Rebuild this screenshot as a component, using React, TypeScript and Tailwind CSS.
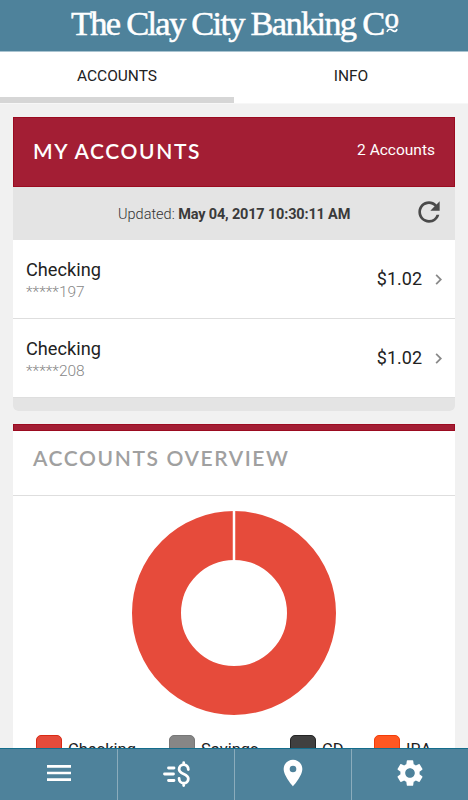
import { MdChevronRight, MdMenu, MdPlace, MdRefresh, MdSettings } from 'react-icons/md';

const accounts = [
  { name: 'Checking', number: '*****197', balance: '$1.02' },
  { name: 'Checking', number: '*****208', balance: '$1.02' },
];

const legend = [
  { label: 'Checking', swatch: 'bg-[#e64b3b] border-[#d92a14]', width: 'w-[133px]' },
  { label: 'Savings', swatch: 'bg-[#868686] border-[#777777]', width: 'w-[121px]' },
  { label: 'CD', swatch: 'bg-[#404040] border-[#242424]', width: 'w-[84px]' },
  { label: 'IRA', swatch: 'bg-[#ff5722] border-[#f23c08]', width: 'w-[70px]' },
];

export default function App() {
  return (
    <div className="flex h-[800px] w-[468px] flex-col overflow-hidden bg-[#f1f1f1] font-['Roboto',sans-serif] text-[#222222]">
      <Header />
      <Tabs />
      <main className="min-h-0 flex-1 overflow-hidden px-[13px] pt-[13px]">
        <AccountsCard />
        <OverviewCard />
      </main>
      <BottomNav />
    </div>
  );
}

function Header() {
  return (
    <header className="flex h-[52px] shrink-0 border-b border-[#a9c3d0] bg-[#4e829b] pl-[71px] text-white">
      <h1 className="flex h-[46px] items-center whitespace-nowrap font-['Liberation_Serif',serif] text-[34.5px] leading-none tracking-[-1.75px] [-webkit-text-stroke:0.5px_white]">
        The Clay City Banking C
        <span className="relative -top-[5px] ml-px text-[29px]">
          o
          <svg className="absolute left-0.5 top-[24px]" width="12" height="5" viewBox="0 0 13 5" fill="none" stroke="currentColor" strokeWidth="1.8">
            <path d="M1 4C3 0 5 1 7 2.500S11 4 12 1" />
          </svg>
        </span>
      </h1>
    </header>
  );
}

function Tabs() {
  return (
    <div className="grid h-[52px] shrink-0 grid-cols-2 border-b border-[#f7f7f7] bg-white text-center text-[15.5px] leading-[49px]">
      <div className="h-[51px] border-b-[6px] border-[#d6d6d6]">ACCOUNTS</div>
      <div className="h-[51px]">INFO</div>
    </div>
  );
}

function AccountsCard() {
  return (
    <section className="overflow-hidden rounded-b-[5px] bg-white">
      <div className="flex h-[70px] items-center justify-between border border-[#9b0b20] bg-[#a31e34] px-[19px] pb-[3px] text-white">
        <h2 className="font-['Lato',sans-serif] text-[21px] font-semibold tracking-[1.6px]">MY ACCOUNTS</h2>
        <span className="text-[15.5px]">2 Accounts</span>
      </div>
      <div className="flex h-[53px] items-center bg-[#e4e4e4] pl-[105px] pr-[12px] text-[14.5px] text-[#333333]">
        <p className="flex-1 whitespace-nowrap pt-0.5 font-light">
          Updated: <b className="font-bold tracking-[-0.17px] text-[#3a3a3a]">May 04, 2017 10:30:11 AM</b>
        </p>
        <MdRefresh className="mb-[3px] size-8 -mr-0.5 text-[#4a4a4a]" />
      </div>
      {accounts.map((account) => (
        <div
          key={account.number}
          className="flex h-[79px] items-center justify-between border-b border-[#dedede] pl-[13px] pr-[6px]"
        >
          <div className="pt-1">
            <div className="text-[18.2px] leading-[22px]">{account.name}</div>
            <div className="text-[15.5px] font-light leading-[22px] text-[#888888]">{account.number}</div>
          </div>
          <div className="flex items-center gap-[6px]">
            <span className="text-lg">{account.balance}</span>
            <MdChevronRight className="size-[21px] text-[#888888]" />
          </div>
        </div>
      ))}
      <div className="h-[13px] bg-[#e4e4e4]" />
    </section>
  );
}

function OverviewCard() {
  return (
    <section className="mt-[13px] h-[360px] bg-white">
      <div className="h-[7px] border border-[#9b0b20] bg-[#a31e34]" />
      <div className="flex h-[65px] items-center border-b border-[#dedede] px-5 pb-[10px]">
        <h2 className="font-['Lato',sans-serif] text-[21px] font-semibold tracking-[1.6px] text-[#a0a0a0]">
          ACCOUNTS OVERVIEW
        </h2>
      </div>
      <svg className="mx-auto mt-[14px] block" width="206" height="206" viewBox="0 0 206 206">
        <circle cx="103" cy="103" r="77.5" fill="none" stroke="#e64b3b" strokeWidth="49" />
        <path d="M103 0V52" stroke="#fff" strokeWidth="2.5" />
      </svg>
      <div className="mt-[19px] flex pl-[23px]">
        {legend.map((item) => (
          <div key={item.label} className={`flex shrink-0 items-start gap-[6px] ${item.width}`}>
            <span className={`size-[26px] rounded-[5px] border ${item.swatch}`} />
            <span className="pt-[5px] text-[16.500px] leading-5">{item.label}</span>
          </div>
        ))}
      </div>
    </section>
  );
}

function BottomNav() {
  return (
    <nav className="grid h-[52px] shrink-0 grid-cols-4 border-t border-[#146d8c] bg-[#4e829b] text-white *:flex *:items-center *:justify-center *:border-l *:border-[#8bacbc] *:pb-[3px] *:first:border-transparent">
      <div>
        <MdMenu className="size-8" />
      </div>
      <div>
        <TransferIcon />
      </div>
      <div>
        <MdPlace className="size-8" />
      </div>
      <div>
        <MdSettings className="size-8" />
      </div>
    </nav>
  );
}

// Dollar sign with speed lines
function TransferIcon() {
  return (
    <svg width="28" height="29" viewBox="0 0 28 29" fill="none" stroke="currentColor" strokeWidth="2.8" strokeLinecap="round">
      <path d="M6.500 9h5.500M2.500 15h9M6.500 21.500h5.500" />
      <path d="M26.300 10.500c0-3-2-4.800-4.600-4.800s-4.600 1.900-4.600 4.500c0 5.500 9.200 4 9.200 9.500 0 2.600-2 4.500-4.600 4.500s-4.600-1.900-4.600-4.800M21.700 3.700v2M21.700 24.300v2.200" />
    </svg>
  );
}
